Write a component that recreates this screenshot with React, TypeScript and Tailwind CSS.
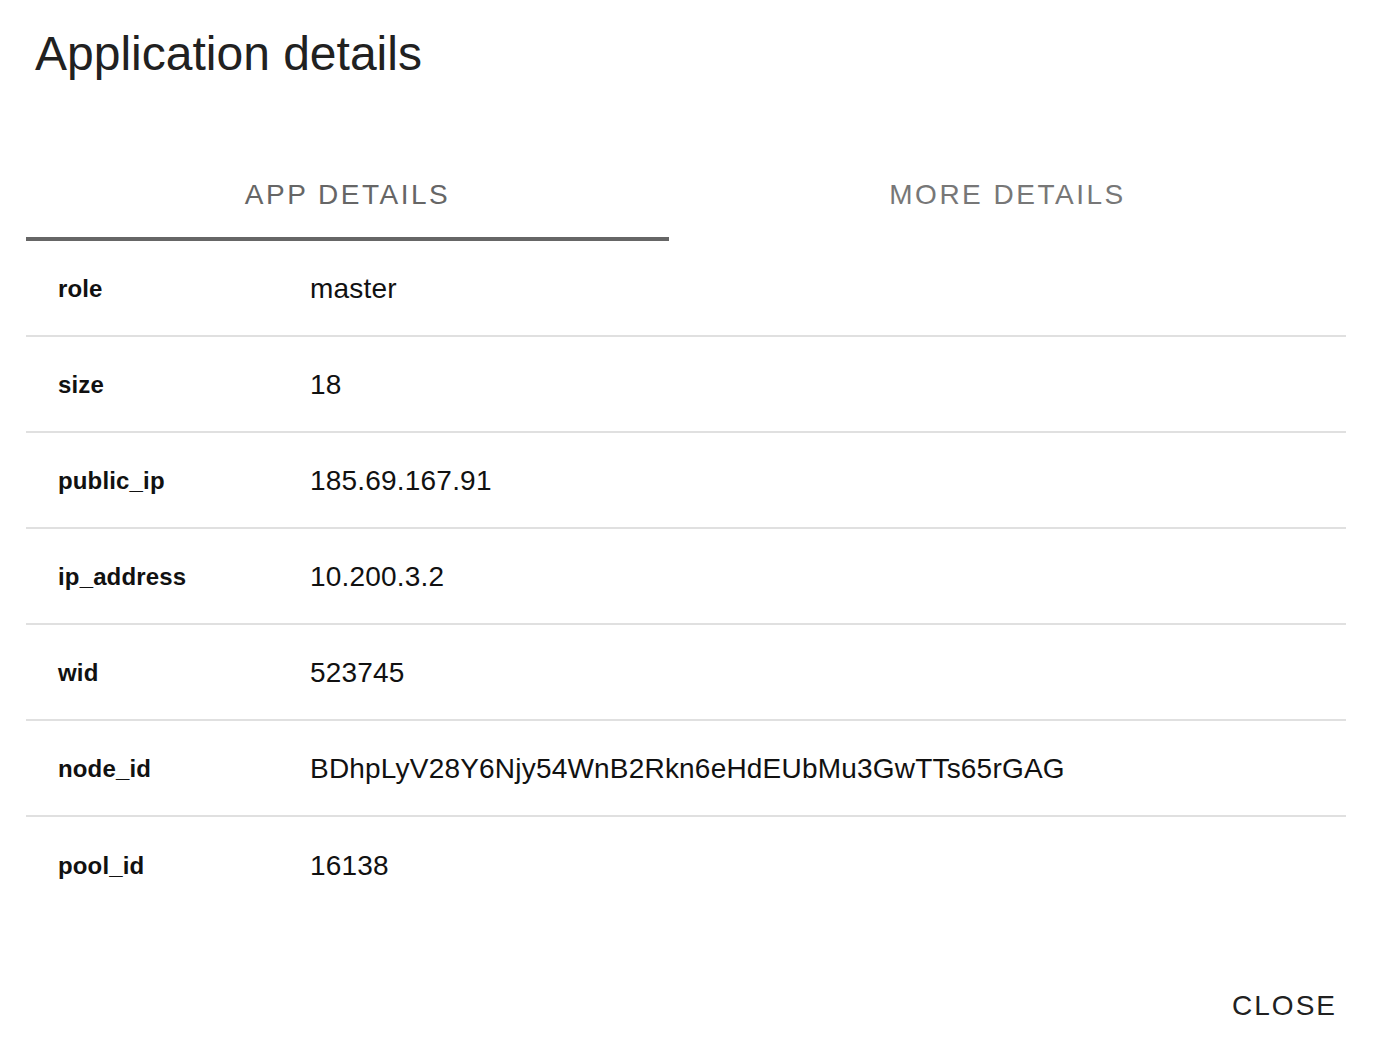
import React, { useState } from 'react';

const rows: [string, string][] = [
  ['role', 'master'],
  ['size', '18'],
  ['public_ip', '185.69.167.91'],
  ['ip_address', '10.200.3.2'],
  ['wid', '523745'],
  ['node_id', 'BDhpLyV28Y6Njy54WnB2Rkn6eHdEUbMu3GwTTs65rGAG'],
  ['pool_id', '16138'],
];

const App: React.FC = () => {
  const [tab, setTab] = useState(0);

  return (
    <div className="w-full h-[1040px] bg-white font-['Liberation_Sans',Arial,sans-serif]">
      {/* Title */}
      <div className="h-[145px] pt-[26px] pl-[35px]">
        <h1 className="text-[48px] leading-[56px] text-[#212121] font-normal">Application details</h1>
      </div>

      {/* Tabs */}
      <div className="ml-[26px] mr-[30px] flex">
        {['APP DETAILS', 'MORE DETAILS'].map((label, i) => (
          <button
            key={label}
            onClick={() => setTab(i)}
            className={
              (i === 0 ? 'w-[643px] shrink-0 ' : 'flex-1 ') +
              'h-[96px] pt-[7px] border-b-4 flex items-center justify-center text-[28px] tracking-[2.5px] ' +
              (tab === i ? 'border-[#666666] text-[#666666]' : 'border-transparent text-[#777777]')
            }
          >
            {label}
          </button>
        ))}
      </div>

      {/* Table */}
      <div className="ml-[26px] mr-[30px]">
        {rows.map(([k, v], i) => (
          <div
            key={k}
            className={
              'h-[96px] pt-[2px] flex items-center ' +
              (i < rows.length - 1 ? 'border-b-2 border-[#e0e0e0]' : '')
            }
          >
            <div className="w-[284px] pl-[32px] text-[24px] tracking-[0.15px] font-bold text-[#111111]">{k}</div>
            <div className="text-[28px] tracking-[0.2px] text-[#111111]">{v}</div>
          </div>
        ))}
      </div>

      {/* Actions */}
      <div className="mt-[75px] flex justify-end pr-[39px]">
        <button className="text-[28px] leading-[36px] tracking-[2px] text-[#212121]">CLOSE</button>
      </div>
    </div>
  );
};

export default App;
